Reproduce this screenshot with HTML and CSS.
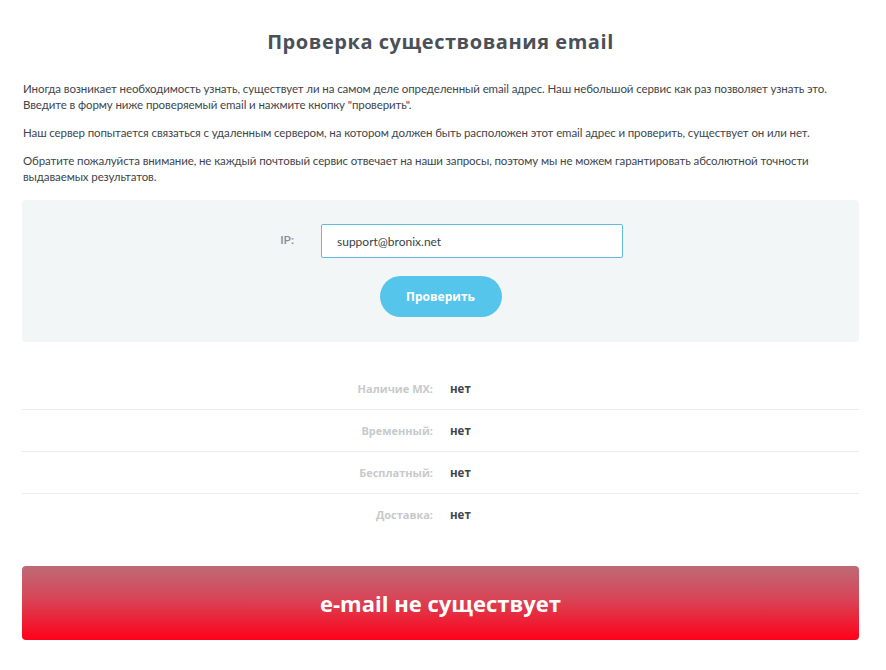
FILE: index.html
```html
<!DOCTYPE html>
<html lang="ru">
<head>
<meta charset="utf-8">
<title>Проверка существования email</title>
<link rel="stylesheet" href="styles.css">
</head>
<body>
<div class="page">
  <h1 class="title">Проверка существования email</h1>
  <p class="text">Иногда возникает необходимость узнать, существует ли на самом деле определенный email адрес. Наш небольшой сервис как раз позволяет узнать это.<br>Введите в форму ниже проверяемый email и нажмите кнопку "проверить".</p>
  <p class="text">Наш сервер попытается связаться с удаленным сервером, на котором должен быть расположен этот email адрес и проверить, существует он или нет.</p>
  <p class="text">Обратите пожалуйста внимание, не каждый почтовый сервис отвечает на наши запросы, поэтому мы не можем гарантировать абсолютной точности<br>выдаваемых результатов.</p>

  <form class="check-box">
    <div class="form-row">
      <label class="form-label" for="email">IP:</label>
      <input class="form-input" id="email" type="text" value="support@bronix.net">
    </div>
    <div class="form-actions">
      <button class="btn" type="button">Проверить</button>
    </div>
  </form>

  <div class="results">
    <div class="res-row"><span class="res-label">Наличие MX:</span><span class="res-value">нет</span></div>
    <div class="res-row"><span class="res-label">Временный:</span><span class="res-value">нет</span></div>
    <div class="res-row"><span class="res-label">Бесплатный:</span><span class="res-value">нет</span></div>
    <div class="res-row"><span class="res-label">Доставка:</span><span class="res-value">нет</span></div>
  </div>

  <div class="verdict">e-mail не существует</div>
</div>
</body>
</html>
```
FILE: styles.css
```css
html, body {
  margin: 0;
  padding: 0;
  background: #ffffff;
}
body {
  font-family: "Lato", "Liberation Sans", sans-serif;
  color: #41454b;
}
.page {
  padding: 0 27px 0 22px;
}
.title {
  margin: 30px 0 27px;
  font-family: "Open Sans", sans-serif;
  font-size: 20px;
  line-height: 24px;
  font-weight: 700;
  text-align: center;
  color: #4b5058;
  letter-spacing: 0.55px;
}
.text {
  margin: 0 0 12px;
  padding-left: 1px;
  font-size: 11.5px;
  letter-spacing: -0.1px;
  line-height: 16px;
}
.check-box {
  margin-top: 15px;
  background: #f2f6f7;
  border-radius: 4px;
  padding: 24px 0 25px;
}
.form-row {
  display: grid;
  grid-template-columns: 272px 302px;
  column-gap: 27px;
  align-items: center;
}
.form-label {
  text-align: right;
  font-size: 12px;
  font-weight: 600;
  color: #8a8d90;
  padding-bottom: 4px;
}
.form-input {
  box-sizing: border-box;
  height: 34px;
  width: 302px;
  border: 1px solid #5cbde0;
  border-radius: 2px;
  background: #fff;
  padding: 0 15px;
  font-family: "Lato", "Liberation Sans", sans-serif;
  font-size: 12px;
  color: #3b3f44;
  outline: none;
}
.form-actions {
  display: flex;
  justify-content: center;
  margin-top: 18px;
}
.btn {
  width: 122px;
  height: 41px;
  border: none;
  border-radius: 21px;
  background: #56c5ec;
  color: #fff;
  font-family: "Open Sans", "Liberation Sans", sans-serif;
  font-size: 12px;
  font-weight: 700;
  cursor: pointer;
}
.results {
  margin-top: 26px;
}
.res-row {
  display: grid;
  grid-template-columns: 411px 1fr;
  column-gap: 17px;
  align-items: center;
  height: 41px;
  border-bottom: 1px solid #ececec;
  font-family: "Open Sans", sans-serif;
  font-size: 11px;
  font-weight: 700;
}
.res-row:last-child {
  border-bottom: none;
}
.res-label {
  text-align: right;
  color: #c7c9cc;
}
.res-value {
  color: #41454b;
  font-size: 11.5px;
}
.verdict {
  margin-top: 31px;
  height: 74px;
  border-radius: 4px;
  background: linear-gradient(to bottom, #be6b77 0%, #d84456 45%, #ff0119 100%);
  color: #fff;
  font-family: "Open Sans", sans-serif;
  font-size: 22px;
  font-weight: 700;
  display: flex;
  align-items: center;
  justify-content: center;
}
```
